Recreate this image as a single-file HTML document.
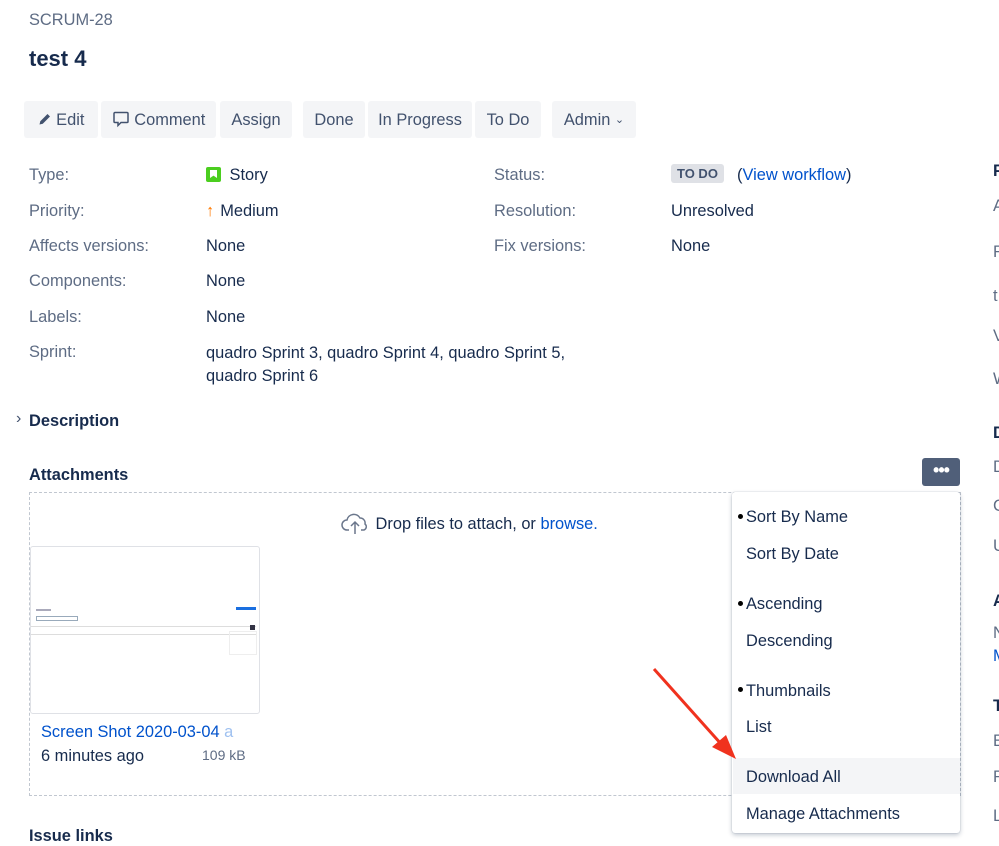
<!DOCTYPE html>
<html><head><meta charset="utf-8"><style>
body{margin:0;width:999px;height:846px;overflow:hidden;background:#fff;font-family:"Liberation Sans",sans-serif;color:#172B4D;font-size:16.4px;position:relative}
.a{position:absolute;white-space:nowrap}
.l{color:#5E6C84}
.btn{position:absolute;top:101px;height:37px;background:#F4F5F7;border-radius:3px;line-height:38px;text-align:center;font-size:16.4px;color:#42526E}
.r{position:absolute;left:993px}
.mi{position:absolute;left:746px;font-size:16.4px}
.dot{position:absolute;left:738px;width:5px;height:5px;border-radius:50%;background:#000}
</style></head><body>
<div class="a l" style="left:29px;top:11px;font-size:16.4px">SCRUM-28</div>
<div class="a" style="left:29px;top:46px;font-size:22px;font-weight:bold">test 4</div>

<div class="btn" style="left:24px;width:74px"><svg width="14" height="14" viewBox="0 0 14 14" style="vertical-align:-1px"><path d="M1.5 12.5l.8-3.3L9.5 2l2.5 2.5-7.2 7.2z" fill="#42526E"/></svg> Edit</div>
<div class="btn" style="left:101px;width:115px"><svg width="18" height="18" viewBox="0 0 18 18" style="vertical-align:-3px"><path d="M3 2.5h12a1 1 0 0 1 1 1v8a1 1 0 0 1-1 1H9l-3 3v-3H3a1 1 0 0 1-1-1v-8a1 1 0 0 1 1-1z" fill="none" stroke="#42526E" stroke-width="1.5"/></svg> Comment</div>
<div class="btn" style="left:220px;width:72px">Assign</div>
<div class="btn" style="left:303px;width:62px">Done</div>
<div class="btn" style="left:368px;width:104px">In Progress</div>
<div class="btn" style="left:475px;width:66px">To Do</div>
<div class="btn" style="left:552px;width:84px">Admin <span style="font-size:11px;vertical-align:2px">&#8964;</span></div>

<div class="a l" style="left:29px;top:166px">Type:</div>
<div class="a" style="left:206px;top:166px"><span style="display:inline-block;width:15px;height:15px;background:#4BCE1F;border-radius:2px;vertical-align:-2px;position:relative;margin-right:4px"><span style="position:absolute;left:4px;top:3px;width:7px;height:8px;background:#fff;clip-path:polygon(0 0,100% 0,100% 100%,50% 70%,0 100%)"></span></span> Story</div>
<div class="a l" style="left:29px;top:202px">Priority:</div>
<div class="a" style="left:206px;top:202px"><span style="color:#FF7A00;font-weight:bold;margin-right:6px">&#8593;</span>Medium</div>
<div class="a l" style="left:29px;top:237px">Affects versions:</div>
<div class="a" style="left:206px;top:237px">None</div>
<div class="a l" style="left:29px;top:272px">Components:</div>
<div class="a" style="left:206px;top:272px">None</div>
<div class="a l" style="left:29px;top:308px">Labels:</div>
<div class="a" style="left:206px;top:308px">None</div>
<div class="a l" style="left:29px;top:343px">Sprint:</div>
<div class="a" style="left:206px;top:342px;line-height:23px">quadro Sprint 3, quadro Sprint 4, quadro Sprint 5,<br>quadro Sprint 6</div>

<div class="a l" style="left:494px;top:166px">Status:</div>
<div class="a" style="left:671px;top:164px;background:#DFE1E6;border-radius:3px;padding:2px 6px;font-size:13px;font-weight:bold;color:#42526E">TO DO</div>
<div class="a" style="left:737px;top:166px">(<span style="color:#0052CC">View workflow</span>)</div>
<div class="a l" style="left:494px;top:202px">Resolution:</div>
<div class="a" style="left:671px;top:202px">Unresolved</div>
<div class="a l" style="left:494px;top:237px">Fix versions:</div>
<div class="a" style="left:671px;top:237px">None</div>

<div class="a" style="left:16px;top:410px;font-size:16px;color:#42526E">&#8250;</div>
<div class="a" style="left:29px;top:412px;font-weight:bold">Description</div>
<div class="a" style="left:29px;top:466px;font-weight:bold">Attachments</div>
<div class="a" style="left:922px;top:458px;width:38px;height:28px;background:#505F79;border-radius:3px;color:#fff;text-align:center;line-height:24px;font-weight:bold;font-size:18px;letter-spacing:-1px">&#8226;&#8226;&#8226;</div>

<div class="a" style="left:29px;top:492px;width:930px;height:302px;border:1px dashed #C1C7D0"></div>
<div class="a" style="left:341px;top:511px"><svg width="30" height="24" viewBox="0 0 30 24" style="vertical-align:-6px"><path d="M8 19H6a5 5 0 0 1 0-10 7 7 0 0 1 13-2 5 5 0 0 1 5 6 3.5 3.5 0 0 1-1 6h-3" fill="none" stroke="#6B778C" stroke-width="1.5"/><path d="M14 23V12M10 15l4-4 4 4" fill="none" stroke="#6B778C" stroke-width="1.5"/></svg> Drop files to attach, or <span style="color:#0052CC">browse.</span></div>

<div class="a" style="left:30px;top:546px;width:228px;height:166px;border:1px solid #DFE1E6;border-radius:3px;background:#fff">
<div style="position:absolute;left:5px;top:62px;width:15px;height:2px;background:#aab"></div>
<div style="position:absolute;left:5px;top:69px;width:40px;height:3px;border:1px solid #9ab"></div>
<div style="position:absolute;left:0;top:79px;width:225px;height:7px;border-top:1px solid #ddd;border-bottom:1px solid #ddd"></div>
<div style="position:absolute;left:205px;top:60px;width:20px;height:3px;background:#1a6fe0"></div>
<div style="position:absolute;left:219px;top:78px;width:5px;height:5px;background:#334"></div>
<div style="position:absolute;left:198px;top:84px;width:26px;height:22px;border:1px solid #eee"></div>
</div>
<div class="a" style="left:41px;top:723px;color:#0052CC">Screen Shot 2020-03-04 <span style="color:#9fc1f0">a</span></div>
<div class="a" style="left:41px;top:747px">6 minutes ago</div>
<div class="a l" style="left:202px;top:747px;font-size:14px">109 kB</div>

<div class="a" style="left:29px;top:827px;font-weight:bold">Issue links</div>

<div class="a" style="left:732px;top:492px;width:228px;height:341px;background:#fff;border-radius:3px;box-shadow:0 2px 5px rgba(9,30,66,.25),0 0 1px rgba(9,30,66,.3)"></div>
<div class="a" style="left:733px;top:758px;width:227px;height:36px;background:#F4F5F7"></div>
<div class="dot" style="top:514px"></div><div class="mi" style="top:508px">Sort By Name</div>
<div class="mi" style="top:545px">Sort By Date</div>
<div class="dot" style="top:601px"></div><div class="mi" style="top:595px">Ascending</div>
<div class="mi" style="top:632px">Descending</div>
<div class="dot" style="top:687px"></div><div class="mi" style="top:682px">Thumbnails</div>
<div class="mi" style="top:718px">List</div>
<div class="mi" style="top:768px">Download All</div>
<div class="mi" style="top:805px">Manage Attachments</div>

<svg class="a" style="left:650px;top:665px" width="90" height="100"><line x1="4" y1="4" x2="72" y2="80" stroke="#F0321E" stroke-width="3"/><polygon points="86,94 62,82 76,70" fill="#F0321E"/></svg>

<div class="r" style="top:162px;font-weight:bold">P</div>
<div class="r l" style="top:197px">A</div>
<div class="r l" style="top:243px">F</div>
<div class="r l" style="top:287px">t</div>
<div class="r l" style="top:327px">V</div>
<div class="r l" style="top:370px">W</div>
<div class="r" style="top:424px;font-weight:bold">D</div>
<div class="r l" style="top:458px">D</div>
<div class="r l" style="top:497px">C</div>
<div class="r l" style="top:537px">U</div>
<div class="r" style="top:592px;font-weight:bold">A</div>
<div class="r l" style="top:624px">N</div>
<div class="r" style="top:647px;color:#0052CC">M</div>
<div class="r" style="top:697px;font-weight:bold">T</div>
<div class="r l" style="top:732px">E</div>
<div class="r l" style="top:768px">F</div>
<div class="r l" style="top:807px">L</div>
</body></html>
